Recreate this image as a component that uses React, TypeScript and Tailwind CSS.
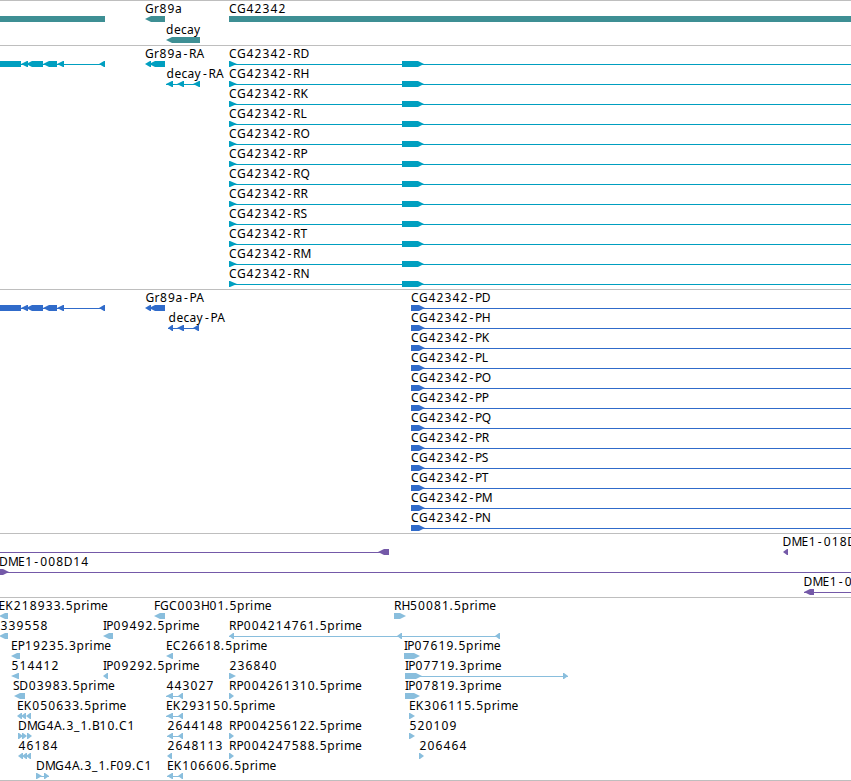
type Feature = {
  from: number;
  to: number;
  dir?: 'left' | 'right';
};

type Item = {
  row: number;
  label?: string;
  x?: number;
  line?: [number, number];
  parts: Feature[];
};

type TrackProps = {
  height: number;
  step?: number;
  color: string;
  items: Item[];
};

const WIDTH = 851;

// glyph advances in px at the label size, everything missing is 8
const ADVANCE: Record<string, number> = {
  C: 8, G: 9, D: 9, M: 10, E: 6.8, F: 6, P: 6.7, R: 7.5, I: 3.2, S: 6.2, B: 7,
  Q: 9, O: 9, L: 6.5, T: 7, N: 9, A: 8, '-': 7, '.': 4, _: 6,
  r: 5, i: 3.8, m: 11, e: 7, c: 6, a: 7, y: 7,
};

// narrow glyphs sit in the middle of their cell
function bearing(ch: string) {
  if (ch === '-') return 1.5;
  if (ch >= '0' && ch <= '9') return 0.5;
  return 0;
}

function glyphPositions(label: string, start: number) {
  let x = start;
  return label.split('').map((ch) => {
    const current = x + bearing(ch);
    x += ADVANCE[ch] ?? 8;
    return current;
  });
}

function L(from: number, to: number): Feature {
  return { from, to, dir: 'left' };
}

function R(from: number, to: number): Feature {
  return { from, to, dir: 'right' };
}

function shape({ from, to, dir }: Feature, y: number) {
  if (!dir) return `M${from} ${y}H${to}V${y + 6}H${from}Z`;
  const w = to - from;
  const tip = dir === 'left' ? from : to;
  const back = dir === 'left' ? to : from;
  const s = dir === 'left' ? 1 : -1;
  if (w <= 8) {
    return `M${tip} ${y + 3}L${back - s} ${y}H${back}V${y + 6}H${back - s}Z`;
  }
  const neck = tip + s * 6;
  return `M${tip} ${y + 3}L${tip + s * 2} ${y + 2}L${neck} ${y}H${back}V${y + 6}H${neck}L${tip + s * 2} ${y + 4}Z`;
}

function Track({ height, step = 20, color, items }: TrackProps) {
  return (
    <section className="border-t border-[#bebebe]">
      <svg width={WIDTH} height={height - 1} className={`block overflow-hidden ${color}`}>
        {items.map((item, i) => {
          const y = 15 + item.row * step;
          return (
            <g key={i}>
              {item.line && (
                <rect
                  x={item.line[0]}
                  y={y + 3}
                  width={item.line[1] - item.line[0]}
                  height={1}
                  fill="currentColor"
                />
              )}
              {item.parts.map((part, n) => (
                <path key={n} d={shape(part, y)} fill="currentColor" />
              ))}
              {item.label && (
                <text
                  x={glyphPositions(item.label, item.x ?? 0).join(' ')}
                  y={y - 3}
                  className="fill-black font-['Noto_Sans',sans-serif] text-[12px]"
                >
                  {item.label}
                </text>
              )}
            </g>
          );
        })}
      </svg>
    </section>
  );
}

const isoforms = ['D', 'H', 'K', 'L', 'O', 'P', 'Q', 'R', 'S', 'T', 'M', 'N'];

const leftGene: Item = {
  row: 0,
  line: [0, 105],
  parts: [{ from: 0, to: 21 }, L(21, 28), L(26, 43), L(43, 57), L(57, 64), L(99, 105)],
};

const genes: Item[] = [
  { row: 0, parts: [{ from: 0, to: 105 }] },
  { row: 0, label: 'Gr89a', x: 145, parts: [L(145, 165)] },
  { row: 1, label: 'decay', x: 166, parts: [L(166, 200)] },
  { row: 0, label: 'CG42342', x: 229, parts: [{ from: 229, to: WIDTH }] },
];

const transcripts: Item[] = [
  leftGene,
  { row: 0, label: 'Gr89a-RA', x: 145, parts: [L(145, 151), L(149, 165)] },
  { row: 1, label: 'decay-RA', x: 166.5, line: [166, 200], parts: [L(166, 173), L(177, 184), L(193, 200)] },
  ...isoforms.map((id, row) => ({
    row,
    label: `CG42342-R${id}`,
    x: 229,
    line: [229, WIDTH] as [number, number],
    parts: [R(229, 237), R(402, 424)],
  })),
];

const proteins: Item[] = [
  leftGene,
  { row: 0, label: 'Gr89a-PA', x: 145.5, parts: [L(145, 151), L(149, 165)] },
  { row: 1, label: 'decay-PA', x: 168.5, line: [168, 199], parts: [L(168, 173), L(177, 184), L(193, 199)] },
  ...isoforms.map((id, row) => ({
    row,
    label: `CG42342-P${id}`,
    x: 411,
    line: [411, WIDTH] as [number, number],
    parts: [R(411, 425)],
  })),
];

const clones: Item[] = [
  { row: 0, line: [0, 389], parts: [L(378, 389)] },
  { row: 0, label: 'DME1-018D', x: 782.5, parts: [L(783, 788)] },
  { row: 1, label: 'DME1-008D14', x: -1, line: [0, WIDTH], parts: [R(-1, 9)] },
  { row: 2, label: 'DME1-0', x: 803.5, line: [804, WIDTH], parts: [L(804, 814)] },
];

const ests: Item[] = [
  { row: 0, label: 'EK218933.5prime', x: -1.5, parts: [L(-1, 8)] },
  { row: 0, label: 'FGC003H01.5prime', x: 154, parts: [L(154, 165)] },
  { row: 0, label: 'RH50081.5prime', x: 394, parts: [R(394, 406)] },
  { row: 1, label: '339558', x: 0, parts: [L(-1, 8)] },
  { row: 1, label: 'IP09492.5prime', x: 103, parts: [L(103, 113)] },
  { row: 1, label: 'RP004214761.5prime', x: 229, line: [229, 500], parts: [L(229, 234), L(397, 402), L(495, 500)] },
  { row: 2, label: 'EP19235.3prime', x: 11, parts: [L(11, 20)] },
  { row: 2, label: 'EC26618.5prime', x: 166, parts: [L(166, 173)] },
  { row: 2, label: 'IP07619.5prime', x: 404, parts: [R(404, 420)] },
  { row: 3, label: '514412', x: 11, parts: [L(11, 19)] },
  { row: 3, label: 'IP09292.5prime', x: 103, parts: [L(103, 108)] },
  { row: 3, label: '236840', x: 229, parts: [R(229, 236)] },
  { row: 3, label: 'IP07719.3prime', x: 405, line: [405, 568], parts: [R(405, 422), R(563, 568)] },
  { row: 4, label: 'SD03983.5prime', x: 13, parts: [L(14, 25)] },
  { row: 4, label: '443027', x: 166, line: [166, 183], parts: [L(166, 173), L(178, 183)] },
  { row: 4, label: 'RP004261310.5prime', x: 229, parts: [R(229, 234)] },
  { row: 4, label: 'IP07819.3prime', x: 405, parts: [R(405, 420)] },
  { row: 5, label: 'EK050633.5prime', x: 17, parts: [L(17, 22), L(21, 26), L(26, 31)] },
  { row: 5, label: 'EK293150.5prime', x: 166, line: [166, 183], parts: [L(166, 173), L(178, 183)] },
  { row: 5, label: 'EK306115.5prime', x: 409, parts: [R(409, 415)] },
  { row: 6, label: 'DMG4A.3_1.B10.C1', x: 18, parts: [R(18, 23), R(22, 27), R(27, 32)] },
  { row: 6, label: '2644148', x: 167, line: [167, 183], parts: [L(167, 173), L(178, 183)] },
  { row: 6, label: 'RP004256122.5prime', x: 229, parts: [R(229, 234)] },
  { row: 6, label: '520109', x: 409, parts: [R(409, 415)] },
  { row: 7, label: '46184', x: 18, parts: [L(18, 23), L(22, 27), L(26, 31)] },
  { row: 7, label: '2648113', x: 167, parts: [L(167, 172)] },
  { row: 7, label: 'RP004247588.5prime', x: 229, parts: [R(229, 234)] },
  { row: 7, label: '206464', x: 419, parts: [R(419, 424)] },
  { row: 8, label: 'DMG4A.3_1.F09.C1', x: 36, line: [36, 49], parts: [R(36, 42), R(44, 49)] },
  { row: 8, label: 'EK106606.5prime', x: 167, line: [167, 183], parts: [L(167, 173), L(178, 183)] },
];

export default function App() {
  return (
    <main className="h-[781px] w-[851px] overflow-hidden border-b border-[#bebebe] bg-white">
      <Track height={45} step={21} color="text-[#3e8f94]" items={genes} />
      <Track height={244} color="text-[#009fc0]" items={transcripts} />
      <Track height={244} color="text-[#306bca]" items={proteins} />
      <Track height={64} color="text-[#7459a8]" items={clones} />
      <Track height={183} color="text-[#89bedd]" items={ests} />
    </main>
  );
}
